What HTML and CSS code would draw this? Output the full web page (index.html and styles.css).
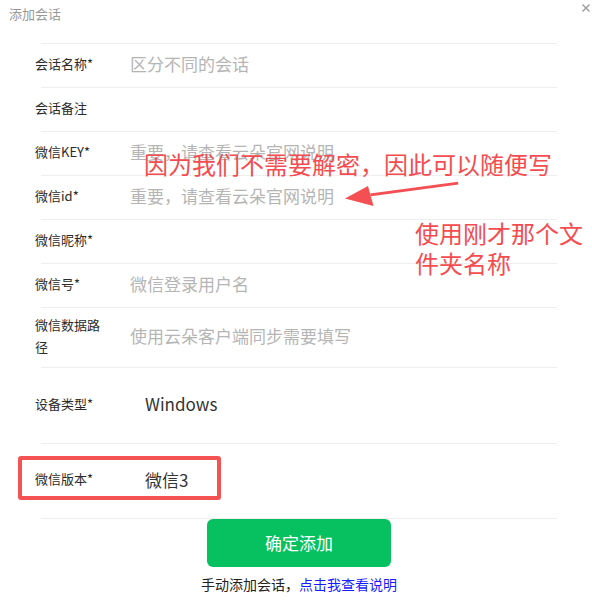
FILE: index.html
```html
<!DOCTYPE html>
<html lang="zh-CN">
<head>
<meta charset="utf-8">
<title>添加会话</title>
<link rel="stylesheet" href="styles.css">
</head>
<body>
<div class="dialog">
  <div class="header">
    <span class="title">添加会话</span>
    <svg class="close" width="10" height="10" viewBox="0 0 10 10"><path d="M1.5 1.5 L8.5 8.5 M8.5 1.5 L1.5 8.5" stroke="#999" stroke-width="1.4" fill="none"/></svg>
  </div>
  <div class="form">
    <div class="row"><div class="label">会话名称*</div><div class="ph">区分不同的会话</div></div>
    <div class="row"><div class="label">会话备注</div><div class="ph"></div></div>
    <div class="row"><div class="label">微信KEY*</div><div class="ph">重要，请查看云朵官网说明</div></div>
    <div class="row"><div class="label">微信id*</div><div class="ph">重要，请查看云朵官网说明</div></div>
    <div class="row"><div class="label">微信昵称*</div><div class="ph"></div></div>
    <div class="row"><div class="label">微信号*</div><div class="ph">微信登录用户名</div></div>
    <div class="row tall"><div class="label">微信数据路径</div><div class="ph">使用云朵客户端同步需要填写</div></div>
    <div class="row big"><div class="label">设备类型*</div><div class="value">Windows</div></div>
    <div class="row big last"><div class="label">微信版本*</div><div class="value">微信3</div><div class="mark-box"></div></div>
    <div class="actions">
      <button class="submit">确定添加</button>
      <p class="hint">手动添加会话，<a class="link">点击我查看说明</a></p>
    </div>
  </div>
</div>
<div class="note note-1">因为我们不需要解密，因此可以随便写</div>
<div class="note note-2">使用刚才那个文件夹名称</div>
<svg class="arrow" width="592" height="610" viewBox="0 0 592 610">
  <path d="M458 181.8 L458.4 184.6 L371 196.2 L370 193.4 Z" fill="#f44f52"/>
  <path d="M345 198.5 L368 186 L373.5 206 Z" fill="#f44f52"/>
</svg>
</body>
</html>
```
FILE: styles.css
```css
* { box-sizing: border-box; }
html, body { margin: 0; padding: 0; background: #fff; }
body {
  width: 592px;
  height: 610px;
  position: relative;
  overflow: hidden;
  font-family: "Noto Sans CJK SC", "Noto Sans", sans-serif;
  color: #333;
}
.header {
  height: 43px;
  display: flex;
  align-items: flex-start;
  justify-content: space-between;
  padding: 0 1px 0 9px;
}
.title {
  font-size: 13px;
  line-height: 28px;
  color: #999;
}
.close { margin-top: 3px; }
.form {
  margin: 0 35px 0 41px;
}
.row {
  position: relative;
  display: flex;
  align-items: center;
  height: 44px;
  padding-bottom: 4px;
  border-top: 1px solid #eeeeee;
}
.row.tall { height: 60px; }
.row.big { height: 76px; }
.row.last { height: 76px; border-bottom: 1px solid #eeeeee; }
.label {
  width: 72px;
  margin-left: -6px;
  margin-right: 23px;
  font-size: 13px;
  line-height: 22px;
  color: #2b2b2b;
  flex-shrink: 0;
}
.ph {
  font-size: 17px;
  color: #b5b5b5;
  white-space: nowrap;
}
.value {
  padding-left: 15px;
  font-size: 17px;
  color: #333;
}
.mark-box {
  position: absolute;
  left: -23px;
  top: 12px;
  width: 203px;
  height: 44px;
  border: 4px solid #f55353;
  border-radius: 3px;
}
.actions {
  display: flex;
  flex-direction: column;
  align-items: center;
}
.submit {
  width: 184px;
  height: 48px;
  border: none;
  border-radius: 6px;
  background: #07c160;
  color: #fff;
  font-family: inherit;
  font-size: 17px;
  padding: 0 0 2px;
}
.hint {
  margin: 7px 0 0;
  font-size: 14px;
  line-height: 20px;
  color: #222;
}
.link { color: #1a1aff; }
.note {
  position: absolute;
  font-size: 24px;
  line-height: 30px;
  color: #f44c50;
}
.note-1 { left: 144px; top: 149px; white-space: nowrap; }
.note-2 { left: 415px; top: 218px; width: 172px; }
.arrow { position: absolute; left: 0; top: 0; pointer-events: none; }
```
